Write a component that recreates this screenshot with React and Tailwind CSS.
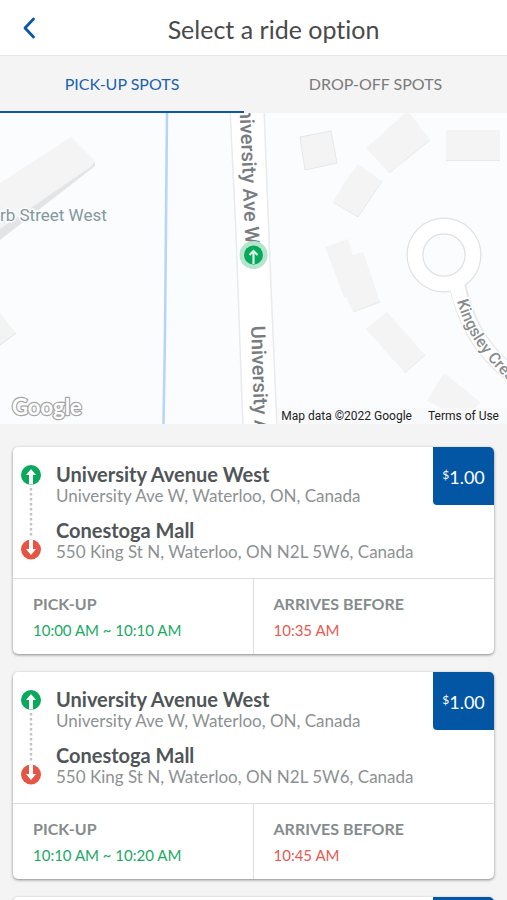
import React, { useState } from 'react';

const RIDES = [
  { id: 1, pickup: '10:00 AM ~ 10:10 AM', arrives: '10:35 AM' },
  { id: 2, pickup: '10:10 AM ~ 10:20 AM', arrives: '10:45 AM' },
  { id: 3, pickup: '10:20 AM ~ 10:30 AM', arrives: '10:55 AM' },
];

function Header() {
  return (
    <header className="flex h-14 shrink-0 items-center border-b border-gray-200 bg-white">
      <button type="button" aria-label="Back" className="flex h-full w-10 items-center justify-end pr-1">
        <svg viewBox="0 0 14 22" className="h-[22px] w-[14px]" fill="none" stroke="#0a57a4" strokeWidth="2.8">
          <path d="M11.5 2 L3 11 L11.5 20" strokeLinecap="round" strokeLinejoin="round" />
        </svg>
      </button>
      <h1 className="flex-1 pt-0.5 text-center text-[25px] leading-8 text-[#4a4a4a]">Select a ride option</h1>
    </header>
  );
}

function Tabs() {
  const [active, setActive] = useState(0);
  return (
    <div role="tablist" className="flex h-[57px] shrink-0 bg-[#f4f4f4]">
      {['PICK-UP SPOTS', 'DROP-OFF SPOTS'].map((label, i) => (
        <button
          key={label}
          type="button"
          role="tab"
          aria-selected={active === i}
          onClick={() => setActive(i)}
          className={
            active === i
              ? 'flex-auto border-b-2 border-[#0f58a5] text-base text-[#1a62ad]'
              : 'flex-auto border-b-2 border-transparent text-base text-[#7b7b7b]'
          }
        >
          {label}
        </button>
      ))}
    </div>
  );
}

function RideMap() {
  return (
    <section aria-label="Map" className="relative shrink-0 bg-[#fafcfe]">
      <svg
        viewBox="0 0 507 311"
        preserveAspectRatio="xMidYMid slice"
        className="block h-[311px] w-full font-[Roboto,sans-serif]"
      >
        <rect width="507" height="311" fill="#fafcfe" />

        <path d="M0 113 L95 49 L95 53 L0 127 Z" fill="#e3e4e6" />
        <path d="M0 70 L71 24 L95 48 L92 53 L0 116 Z" fill="#f4f4f4" />
        <path d="M0 200 L16 220 L0 232 Z" fill="#f3f3f3" />
        <path d="M16 220 L0 232" stroke="#e2e3e4" />

        <g fill="#f4f4f4">
          <path d="M300 24 L331 18 L337 50 L305 57 Z" stroke="#e6e7e8" />
          <path d="M366 35 L408 -2 L430 27 L389 60 Z" />
          <path d="M358 51 L382 68 L358 104 L333 89 L344 70 Z" />
          <path d="M446 17 H500 V47 H446 Z" />
          <path d="M325 134 L348 126 L353 142 L363 139 L380 189 L353 199 L347 185 L344 184 Z" />
          <path d="M366 216 L376 208 L387 199 L425 242 L405 260 Z" />
          <path d="M427 288 L444 260 L480 289 L466 307 Z" />
        </g>
        <g fill="none" stroke="#e8e9ea">
          <path d="M430 27 L389 60" />
          <path d="M382 68 L358 104 L333 89" />
          <path d="M446 47.5 H500" />
          <path d="M380 189 L353 199" />
          <path d="M425 242 L405 260" />
        </g>

        <path d="M167 0 L165 220 L163.5 311" fill="none" stroke="#b6d3fb" strokeWidth="2.5" />

        <path d="M230 -5 L236 120 L243 316 L277 316 L270 150 L264 -5 Z" fill="#fff" stroke="#e8eaeb" strokeWidth="1.5" />

        <path d="M456 164 C463 205 480 240 520 267" fill="none" stroke="#e4e6e8" strokeWidth="17" />
        <circle cx="444" cy="142" r="29" fill="none" stroke="#dfe1e3" strokeWidth="17" />
        <circle cx="444" cy="142" r="29" fill="none" stroke="#fff" strokeWidth="14.5" />
        <path d="M456 168 C463 205 480 240 520 267" fill="none" stroke="#fff" strokeWidth="14.5" />

        <g fill="#777c80" stroke="#fff" strokeWidth="4" strokeLinejoin="round" paintOrder="stroke" className="font-medium">
          <text fontSize="20" transform="translate(239 -18) rotate(87.5)">University Ave W</text>
          <text fontSize="20" transform="translate(251 213) rotate(88)">University Ave W</text>
          <path id="kingsley" d="M457 188 C465 218 481 242 515 274" fill="none" stroke="none" />
          <text fontSize="16" strokeWidth="3" fill="#888c8f">
            <textPath href="#kingsley">Kingsley Cres</textPath>
          </text>
        </g>
        <text x="0" y="108" fontSize="17" fill="#84979d" stroke="#fafcfe" strokeWidth="3" paintOrder="stroke">
          rb Street West
        </text>

        <text
          x="12"
          y="302"
          fontSize="22"
          fill="#fff"
          stroke="#a4a4a4"
          strokeWidth="2.4"
          strokeLinejoin="round"
          paintOrder="stroke"
          className="font-[Lato,sans-serif] font-bold"
        >
          Google
        </text>

        <circle cx="253.5" cy="142" r="14" fill="#b5e5cd" />
        <circle cx="253.5" cy="142" r="9.5" fill="#06a95a" />
        <path d="M253.5 151 V138 M249.5 142 L253.5 138 L257.5 142" fill="none" stroke="#d9f5e6" strokeWidth="2.2" />
      </svg>
      <div className="absolute right-0 bottom-0 flex gap-4 bg-[#f7f8f9]/80 pr-2 pl-1 font-[Roboto,sans-serif] text-xs leading-4 text-[#222]">
        <span>Map data ©2022 Google</span>
        <a href="#terms">Terms of Use</a>
      </div>
    </section>
  );
}

function RouteLine() {
  return (
    <svg viewBox="0 0 20 96" className="h-24 w-5 shrink-0" aria-hidden="true">
      <path d="M10 24 V74" stroke="#c4c4c4" strokeWidth="2.5" strokeDasharray="2.5 2.5" />
      <circle cx="10" cy="11" r="10" fill="#08a95a" />
      <path d="M10 5 L15 11 H12 V20.5 H8 V11 H5 Z" fill="#fff" />
      <circle cx="10" cy="85.5" r="10" fill="#e65446" />
      <path d="M10 91 L15 85 H12 V75.5 H8 V85 H5 Z" fill="#fff" />
    </svg>
  );
}

function Stop({ name, address }) {
  return (
    <div>
      <h2 className="text-xl leading-6 font-bold text-[#505558]">{name}</h2>
      <p className="text-[17px] leading-5 text-[#8c9192]">{address}</p>
    </div>
  );
}

function RideCard({ ride }) {
  return (
    <article className="shrink-0 overflow-hidden rounded-[5px] bg-white shadow-[0_1px_3px_rgba(0,0,0,0.45)]">
      <div className="flex h-[132px] items-start border-b border-[#dedede]">
        <div className="flex flex-1 gap-[15px] pt-[15px] pl-2">
          <div className="pt-0.5">
            <RouteLine />
          </div>
          <div className="flex flex-col gap-3">
            <Stop name="University Avenue West" address="University Ave W, Waterloo, ON, Canada" />
            <Stop name="Conestoga Mall" address="550 King St N, Waterloo, ON N2L 5W6, Canada" />
          </div>
        </div>
        <div className="flex h-[58px] w-[61px] shrink-0 items-start justify-center rounded-bl-sm bg-[#0356a4] pt-[18px] text-white">
          <span className="text-xs leading-5">$</span>
          <span className="text-lg leading-6">1.00</span>
        </div>
      </div>
      <dl className="grid h-[75px] grid-cols-2 leading-5">
        <div className="flex flex-col gap-1.5 border-r border-[#dedede] pt-[15px] pl-5">
          <dt className="text-base leading-5 font-bold text-[#858c8d]">PICK-UP</dt>
          <dd className="text-[15px] leading-5 text-[#18aa64]">{ride.pickup}</dd>
        </div>
        <div className="flex flex-col gap-1.5 pt-[15px] pl-5">
          <dt className="text-base leading-5 font-bold text-[#858c8d]">ARRIVES BEFORE</dt>
          <dd className="text-[15px] leading-5 text-[#e75a50]">{ride.arrives}</dd>
        </div>
      </dl>
    </article>
  );
}

export default function App() {
  return (
    <div className="flex h-screen flex-col overflow-hidden bg-[#f4f4f4] font-[Lato,sans-serif] [font-variant-ligatures:none]">
      <Header />
      <Tabs />
      <RideMap />
      <main className="flex min-h-0 flex-1 flex-col gap-[18px] overflow-y-auto px-[13px] pt-[23px] [scrollbar-width:none]">
        {RIDES.map((ride) => (
          <RideCard key={ride.id} ride={ride} />
        ))}
      </main>
    </div>
  );
}
